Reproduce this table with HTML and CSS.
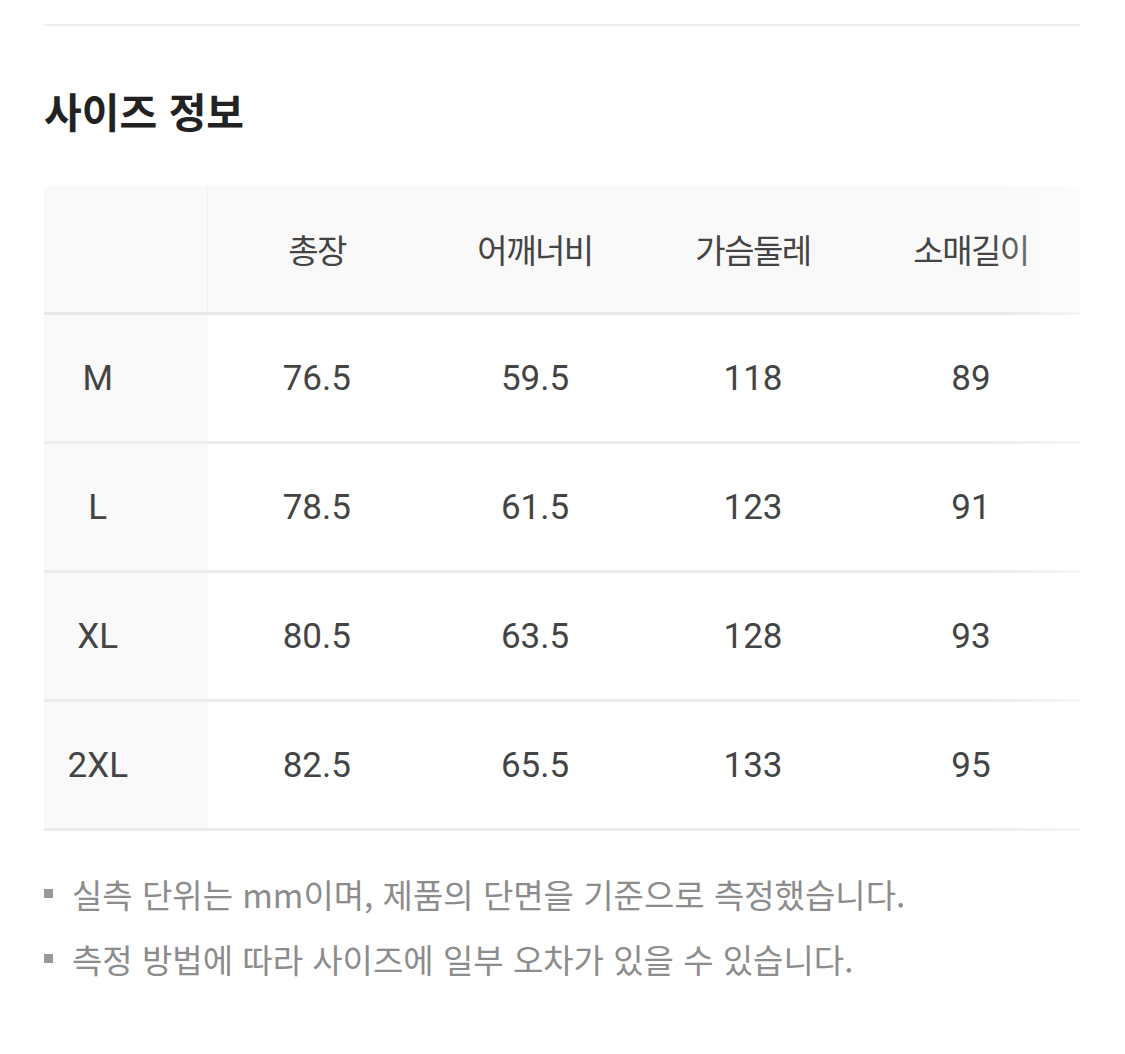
FILE: index.html
```html
<!DOCTYPE html>
<html lang="ko">
<head>
<meta charset="utf-8">
<title>사이즈 정보</title>
<link rel="stylesheet" href="styles.css">
</head>
<body>
<div class="page">
  <div class="divider"></div>
  <h2 class="title">사이즈 정보</h2>
  <div class="table-wrap">
    <table class="size-table">
      <thead>
        <tr>
          <th class="corner"></th>
          <th>총장</th>
          <th>어깨너비</th>
          <th>가슴둘레</th>
          <th>소매길이</th>
        </tr>
      </thead>
      <tbody>
        <tr><th class="size">M</th><td>76.5</td><td>59.5</td><td>118</td><td>89</td></tr>
        <tr><th class="size">L</th><td>78.5</td><td>61.5</td><td>123</td><td>91</td></tr>
        <tr><th class="size">XL</th><td>80.5</td><td>63.5</td><td>128</td><td>93</td></tr>
        <tr><th class="size">2XL</th><td>82.5</td><td>65.5</td><td>133</td><td>95</td></tr>
      </tbody>
    </table>
    <div class="fade"></div>
  </div>
  <ul class="notes">
    <li>실측 단위는 mm이며, 제품의 단면을 기준으로 측정했습니다.</li>
    <li>측정 방법에 따라 사이즈에 일부 오차가 있을 수 있습니다.</li>
  </ul>
</div>
</body>
</html>
```

FILE: styles.css
```css
html, body {
  margin: 0;
  padding: 0;
  background: #ffffff;
}

body {
  font-family: Roboto, "Noto Sans CJK KR", sans-serif;
  color: #444444;
}

.page {
  width: 1036px;
  padding: 0 45px 0 44px;
}

.divider {
  margin-top: 24px;
  height: 2px;
  background: #eeeeee;
}

.title {
  margin: 60px 0 0 0;
  font-family: "Noto Sans CJK KR", sans-serif;
  font-size: 41px;
  line-height: 48px;
  font-weight: 700;
  color: #222222;
  letter-spacing: 0;
}

.table-wrap {
  position: relative;
  margin-top: 52px;
}

.size-table {
  width: 1036px;
  border-collapse: collapse;
  table-layout: fixed;
}

.size-table th,
.size-table td {
  padding: 0;
  text-align: center;
  font-weight: 400;
}

.size-table thead th {
  height: 126px;
  background: #f9f9f9;
  font-family: "Noto Sans CJK KR", sans-serif;
  font-size: 33px;
  letter-spacing: -1.5px;
  color: #444444;
  border-bottom: 3px solid #e8e8e8;
  width: 218px;
}

.size-table thead th.corner {
  width: 163px;
  border-right: 1px solid #f2f2f2;
}

.size-table tbody th,
.size-table tbody td {
  height: 126px;
  font-size: 35px;
  color: #444444;
  border-bottom: 3px solid #ececec;
}

.size-table tbody th.size {
  background: #f9f9f9;
  padding-right: 56px;
}

.fade {
  position: absolute;
  top: 0;
  right: 0;
  bottom: 0;
  width: 90px;
  background: linear-gradient(to right, rgba(255,255,255,0), rgba(255,255,255,0.55));
  pointer-events: none;
}

.notes {
  list-style: none;
  margin: 30px 0 0 0;
  padding: 0;
}

.notes li {
  display: flex;
  align-items: center;
  gap: 19px;
  height: 65px;
  font-family: "Noto Sans CJK KR", sans-serif;
  font-size: 33px;
  color: #8c8c8c;
  letter-spacing: 0;
}

.notes li::before {
  content: "";
  flex: none;
  width: 9px;
  height: 9px;
  background: #999999;
}
```
